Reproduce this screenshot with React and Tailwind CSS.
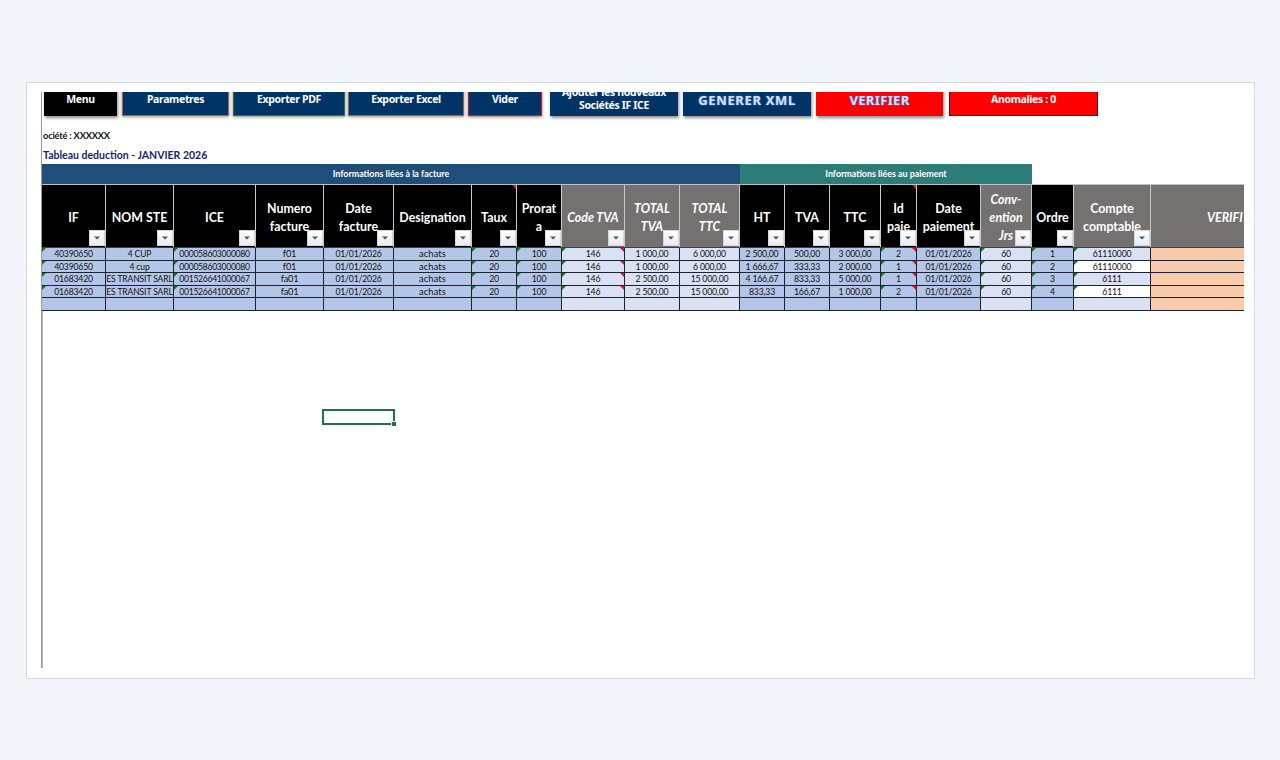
// src/App.jsx
import React from "react";
import clsx from "clsx";

const SHADOW = "shadow-[1px_2px_3px_rgba(0,0,0,0.45)]";
const LABEL = "pb-[9px] text-[10.5px] tracking-[-0.35px]";
const ART_LABEL =
  "pb-[9px] text-[13px] text-[#d3e2ff] [text-shadow:0_0_1px_#4472c4,0_0_2px_#4472c4]";

const buttons = [
  { label: "Menu", box: "w-[73px] bg-black", shadow: SHADOW, text: "pb-[10px] text-[10.5px] tracking-[-0.35px]" },
  { label: "Parametres", box: "ml-[5px] w-[107px] bg-[#003366] border border-[#a8664e]", shadow: "shadow-[0_1px_3px_rgba(150,90,60,0.7)]" },
  { label: "Exporter PDF", box: "ml-[4px] w-[112px] bg-[#003366] border border-[#1d7a3c]", shadow: "shadow-[0_1px_3px_rgba(70,100,70,0.7)]" },
  { label: "Exporter Excel", box: "ml-[3px] w-[116px] bg-[#003366] border border-[#8d6a50]", shadow: "shadow-[0_1px_3px_rgba(130,90,60,0.7)]" },
  { label: "Vider", box: "ml-[4px] w-[74px] bg-[#003366] border border-[#c8193c]", shadow: "shadow-[0_1px_3px_rgba(140,40,50,0.7)]" },
  { label: "Ajouter les nouveaux Sociétés IF ICE", box: "ml-[8px] w-[128px] bg-[#003366]", shadow: SHADOW, text: "pb-[4px] text-[10.5px] tracking-[-0.35px]" },
  { label: "GENERER XML", box: "ml-[5px] w-[128px] bg-[#003366]", shadow: SHADOW, text: clsx(ART_LABEL, "tracking-[0.65px]") },
  { label: "VERIFIER", box: "ml-[5px] w-[127px] bg-[#ff0000]", shadow: SHADOW, text: clsx(ART_LABEL, "tracking-[0.35px]") },
  { label: "Anomalies : 0", box: "ml-[6px] w-[149px] bg-[#ff0000] border border-[#6b0000]", shadow: "" },
];

const GRID =
  "grid grid-cols-[64px_68px_82px_68px_70px_78px_45px_45px_63px_55px_60px_45px_45px_51px_36px_64px_51px_42px_77px_93px]";

// tone: blue = input column, pale = computed column, check = verification
const columns = [
  { lines: ["IF"], tone: "blue", error: true },
  { lines: ["NOM STE"], tone: "blue", text: "text-[8.5px] tracking-[-0.1px]" },
  { lines: ["ICE"], tone: "blue", error: true, text: "text-[8.6px] tracking-[-0.3px]" },
  { lines: ["Numero", "facture"], tone: "blue", text: "text-[9.2px] tracking-[-0.2px]" },
  { lines: ["Date", "facture"], tone: "blue" },
  { lines: ["Designation"], tone: "blue", text: "text-[9.3px] tracking-[0.1px]" },
  { lines: ["Taux"], tone: "blue", error: true, headNote: true },
  { lines: ["Prorat", "a"], tone: "blue", error: true },
  { lines: ["Code TVA"], tone: "pale", italic: true, error: true, note: true },
  { lines: ["TOTAL", "TVA"], tone: "pale", italic: true },
  { lines: ["TOTAL", "TTC"], tone: "pale", italic: true },
  { lines: ["HT"], tone: "blue" },
  { lines: ["TVA"], tone: "blue" },
  { lines: ["TTC"], tone: "blue" },
  { lines: ["Id", "paie"], tone: "blue", error: true, note: true, headNote: true },
  { lines: ["Date", "paiement"], tone: "blue" },
  { lines: ["Conv-", "ention", "Jrs"], tone: "pale", italic: true, error: true },
  { lines: ["Ordre"], tone: "blue", error: true },
  { lines: ["Compte", "comptable"], tone: "pale", error: true },
  { lines: ["VERIFI"], tone: "check", italic: true },
];

const rows = [
  ["40390650", "4 CUP", "000058603000080", "f01", "01/01/2026", "achats", "20", "100", "146", "1 000,00", "6 000,00", "2 500,00", "500,00", "3 000,00", "2", "01/01/2026", "60", "1", "61110000", ""],
  ["40390650", "4 cup", "000058603000080", "f01", "01/01/2026", "achats", "20", "100", "146", "1 000,00", "6 000,00", "1 666,67", "333,33", "2 000,00", "1", "01/01/2026", "60", "2", "61110000", ""],
  ["01683420", "ES TRANSIT SARL", "001526641000067", "fa01", "01/01/2026", "achats", "20", "100", "146", "2 500,00", "15 000,00", "4 166,67", "833,33", "5 000,00", "1", "01/01/2026", "60", "3", "6111", ""],
  ["01683420", "ES TRANSIT SARL", "001526641000067", "fa01", "01/01/2026", "achats", "20", "100", "146", "2 500,00", "15 000,00", "833,33", "166,67", "1 000,00", "2", "01/01/2026", "60", "4", "6111", ""],
];

const tones = {
  blue: "bg-[#b4c6e7]",
  pale: "bg-[#d9e1f2]",
  check: "bg-[#f8cbad]",
};

const rowHeights = ["h-[13px]", "h-[12px]", "h-[13px]", "h-[12px]", "h-[13px]"];

function ActionButton({ label, box, shadow, text = LABEL }) {
  return (
    <button
      className={clsx(
        "flex h-[44px] shrink-0 items-end justify-center px-[6px] text-center font-['Noto_Sans','Open_Sans',sans-serif] leading-[13px] font-bold text-white",
        box,
        shadow
      )}
    >
      <span className={text}>{label}</span>
    </button>
  );
}

function FilterButton() {
  return (
    <span className="absolute right-0 bottom-[1px] flex h-[16px] w-[16px] items-center justify-center border border-[#d5d7dc] bg-linear-to-b from-white to-[#e9ebf2]">
      <svg width="6" height="4" viewBox="0 0 6 4">
        <path d="M0 0.5h6L3 3.5z" fill="#555" />
      </svg>
    </span>
  );
}

function Corner({ side }) {
  return (
    <svg
      className={clsx("absolute top-0", side === "left" ? "left-0" : "right-0")}
      width="4"
      height="4"
      viewBox="0 0 4 4"
    >
      {side === "left" ? (
        <path d="M0 0h4L0 4z" fill="#107c10" />
      ) : (
        <path d="M0 0h4v4z" fill="#e8112d" />
      )}
    </svg>
  );
}

function HeaderCell({ column }) {
  const isCheck = column.tone === "check";
  return (
    <div
      className={clsx(
        "relative flex flex-col justify-center overflow-hidden pt-[3px] text-[12.4px] leading-[18px] font-bold whitespace-nowrap text-white",
        isCheck ? "items-start pl-[56px]" : "items-center border-r border-[#c9c9c9]",
        column.tone === "blue" ? "bg-black" : "bg-[#767171]",
        column.italic && "italic"
      )}
    >
      {column.lines.map((line) => (
        <span key={line}>{line}</span>
      ))}
      {column.headNote && <Corner side="right" />}
      {!isCheck && <FilterButton />}
    </div>
  );
}

function DataCell({ column, value, white }) {
  return (
    <div
      className={clsx(
        "relative flex items-center justify-center overflow-hidden border-b border-[#1c2230] whitespace-nowrap",
        column.tone !== "check" && "border-r",
        column.text || "text-[8.7px] tracking-[-0.2px]",
        white ? "bg-white" : tones[column.tone]
      )}
    >
      {value}
      {value && column.error && <Corner side="left" />}
      {value && column.note && <Corner side="right" />}
    </div>
  );
}

export default function App() {
  return (
    <div className="h-[760px] w-[1280px] bg-[#f2f6fb] px-[26px] pt-[82px] font-['Lato',sans-serif]">
      <div className="h-[597px] w-[1229px] border border-[#d3d9e1] bg-white pt-[9px] pl-[14px]">
        <div className="flex h-[576px] w-[1203px] flex-col overflow-hidden border-l border-[#9a9a9a]">
          {/* Action bar, scrolled partly out of view */}
          <div className="flex h-[32px] shrink-0 items-end overflow-hidden pb-[8px] pl-[2px]">
            {buttons.map((button) => (
              <ActionButton key={button.label} {...button} />
            ))}
          </div>

          <div className="h-[22px] shrink-0 pt-[5px] pl-px text-[9.3px] leading-[14px] font-bold tracking-[-0.2px] text-[#111]">
            ociété : XXXXXX
          </div>
          <div className="h-[18px] shrink-0 pt-[2px] pl-[1px] text-[10.5px] leading-[14px] font-bold text-[#14266b]">
            Tableau deduction - JANVIER 2026
          </div>

          {/* Section bands */}
          <div className="flex h-[20px] shrink-0 text-[8.9px] font-bold text-white">
            <div className="flex w-[698px] items-center justify-center bg-[#1f4e78]">
              Informations liées à la facture
            </div>
            <div className="flex w-[292px] items-center justify-center bg-[#2c7d78]">
              Informations liées au paiement
            </div>
          </div>

          <div className={clsx(GRID, "h-[64px] shrink-0 border-t border-[#b9c2cc] border-b border-b-[#3a3f4a]")}>
            {columns.map((column, i) => (
              <HeaderCell key={i} column={column} />
            ))}
          </div>

          <div className="leading-[12px] text-[#111]">
            {[...rows, []].map((row, r) => (
              <div key={r} className={clsx(GRID, rowHeights[r])}>
                {columns.map((column, c) => (
                  <DataCell
                    key={c}
                    column={column}
                    value={row[c]}
                    white={c === 18 && (r === 1 || r === 3)}
                  />
                ))}
              </div>
            ))}
          </div>

          <div className="flex-1 border-l border-[#b4b4b4] pt-[98px] pl-[279px]">
            {/* Selected cell */}
            <div className="relative h-[16px] w-[73px] border-2 border-[#217346]">
              <span className="absolute -right-[4px] -bottom-[4px] h-[6px] w-[6px] border border-white bg-[#217346]" />
            </div>
          </div>
        </div>
      </div>
    </div>
  );
}
